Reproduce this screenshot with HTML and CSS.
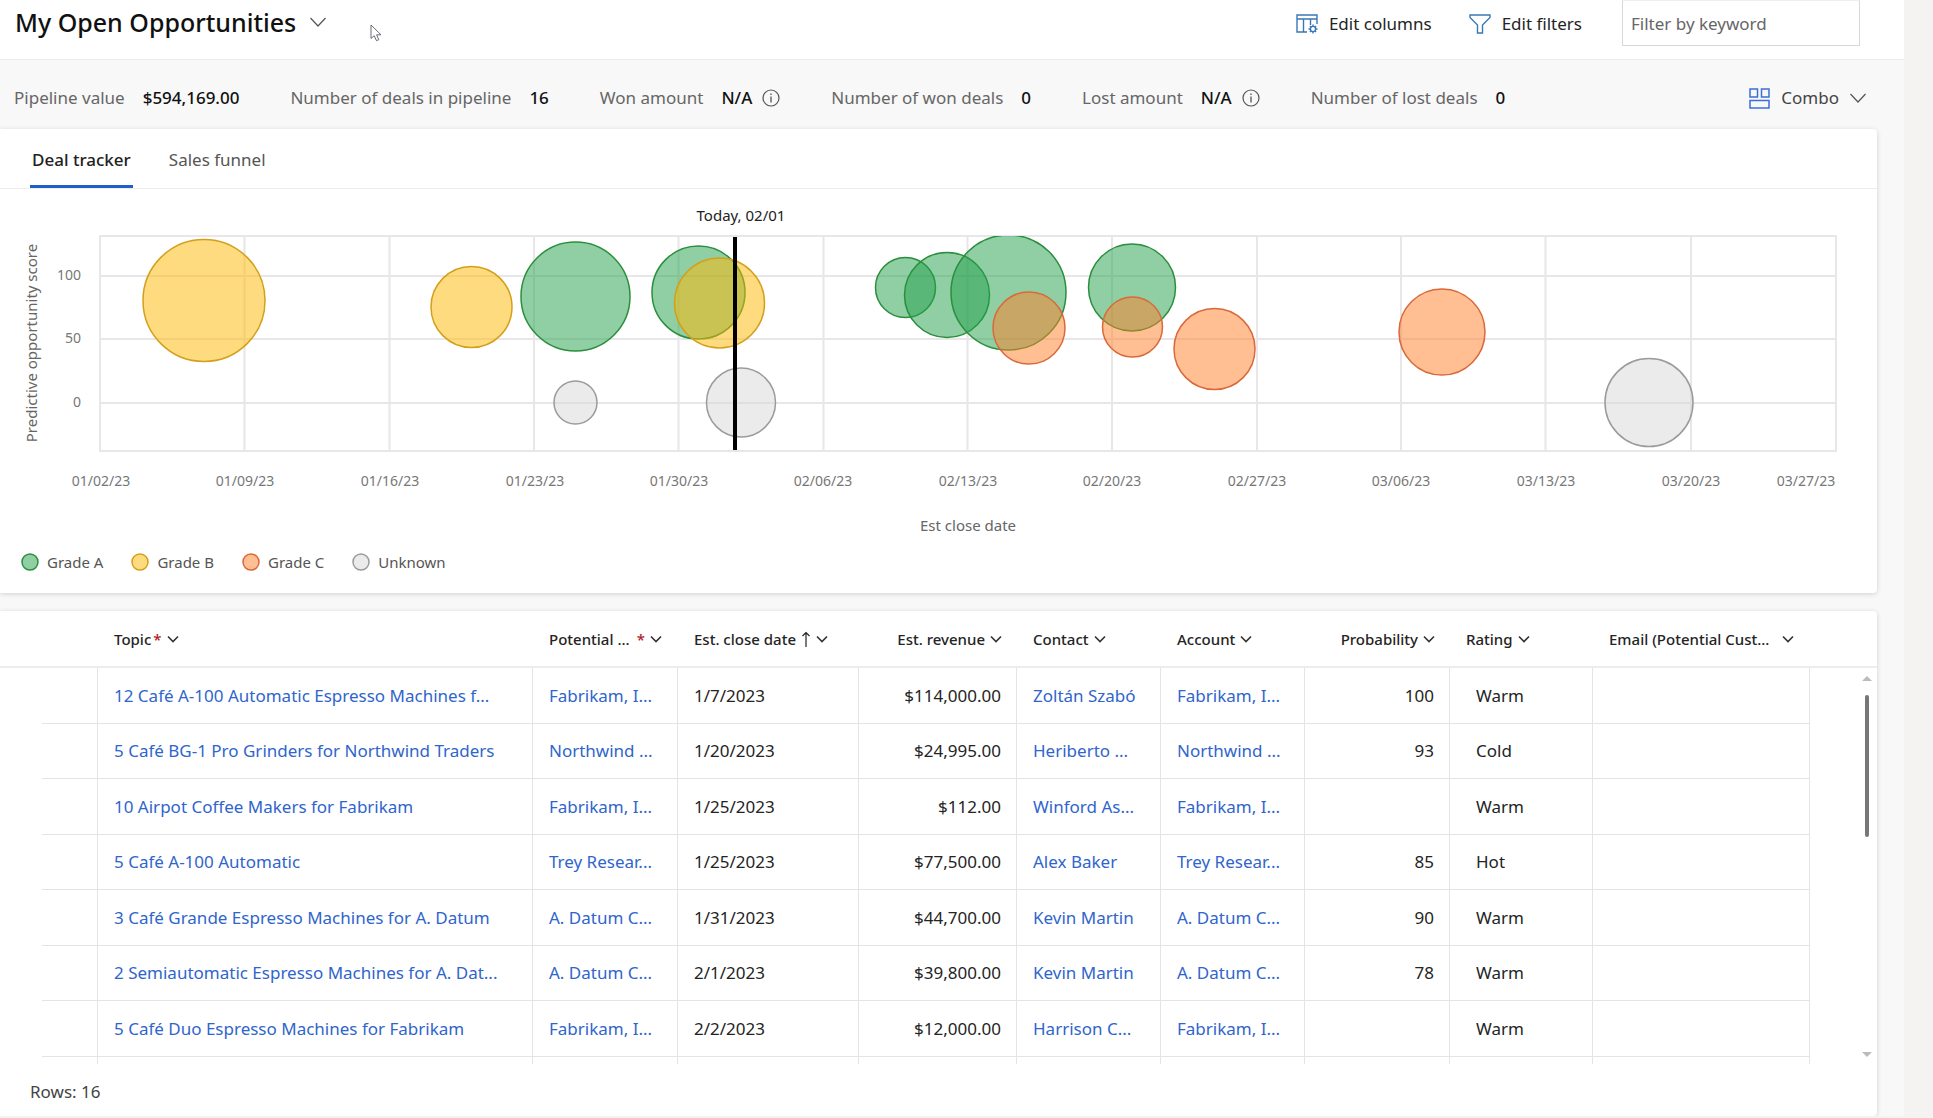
FILE: index.html
```html
<!DOCTYPE html>
<html lang="en">
<head>
<meta charset="utf-8">
<title>My Open Opportunities</title>
<meta name="viewport" content="width=device-width, initial-scale=1">
<link rel="stylesheet" href="styles.css">
</head>
<body>
<svg class="sprite" aria-hidden="true">
  <symbol id="chev" viewBox="0 0 12 8"><path d="M1 1.5l5 5 5-5" fill="none" stroke="currentColor" stroke-width="1.6"/></symbol>
  <symbol id="chev-thin" viewBox="0 0 16 10"><path d="M.5 1l7.500 8 7.500-8" fill="none" stroke="currentColor" stroke-width="1.200"/></symbol>
  <symbol id="info" viewBox="0 0 18 18"><circle cx="9" cy="9" r="8" fill="none" stroke="currentColor" stroke-width="1.200"/><path d="M9 7.500v6M9 4.500v1.500" stroke="currentColor" stroke-width="1.300"/></symbol>
</svg>
<main class="page">
  <header class="topbar">
    <h1 class="title"><button class="title-button" type="button">My Open Opportunities <svg class="chev-thin"><use href="#chev-thin"/></svg></button></h1>
    <div class="commands">
      <button class="command" type="button">
        <svg class="command-icon" viewBox="0 0 22 20"><g fill="none" stroke="currentColor" stroke-width="1.400"><path d="M11 18H1V1h20v9M1 5h20M7.500 5v13M14.500 5v6"/><circle cx="17" cy="15" r="2.600"/><path d="M17 10.500v1.900M17 17.600v1.900M12.500 15h1.900M19.600 15h1.900M13.900 11.900l1.300 1.300M18.800 16.800l1.300 1.300M20.100 11.900l-1.300 1.300M15.200 16.800l-1.300 1.300"/></g></svg>
        Edit columns</button>
      <button class="command" type="button">
        <svg class="command-icon" viewBox="0 0 22 20"><path d="M1 1h20v2.500l-7.500 7.500v8h-5v-8L1 3.500z" fill="none" stroke="currentColor" stroke-width="1.400"/></svg>
        Edit filters</button>
    </div>
    <input class="keyword" type="text" placeholder="Filter by keyword" aria-label="Filter by keyword">
    <svg class="pointer" viewBox="0 0 12 18" aria-hidden="true"><path d="M1 1v13.500l3.200-2.800 2.300 5 2.300-1-2.200-4.900H11z" fill="#fff" stroke="#6b6b76" stroke-width="1"/></svg>
  </header>

  <section class="metrics" aria-label="Summary">
    <dl class="metric-list">
      <div class="metric"><dt>Pipeline value</dt><dd>$594,169.00</dd></div>
      <div class="metric"><dt>Number of deals in pipeline</dt><dd>16</dd></div>
      <div class="metric"><dt>Won amount</dt><dd>N/A <svg class="info"><use href="#info"/></svg></dd></div>
      <div class="metric"><dt>Number of won deals</dt><dd>0</dd></div>
      <div class="metric"><dt>Lost amount</dt><dd>N/A <svg class="info"><use href="#info"/></svg></dd></div>
      <div class="metric"><dt>Number of lost deals</dt><dd>0</dd></div>
    </dl>
    <button class="view-switch" type="button">
      <svg class="combo-icon" viewBox="0 0 21 21"><path d="M1 1h7.500v8H1zM12.500 1H20v8h-7.500zM1 12.500h19V20H1z" fill="none" stroke="currentColor" stroke-width="1.500"/></svg>
      Combo
      <svg class="chev-thin"><use href="#chev-thin"/></svg>
    </button>
  </section>

  <section class="card chart-card">
    <div class="tabs" role="tablist">
      <button class="tab tab-active" type="button" role="tab" aria-selected="true">Deal tracker</button>
      <button class="tab" type="button" role="tab" aria-selected="false">Sales funnel</button>
    </div>
    <svg class="chart" viewBox="0 189 1877 351" role="img" aria-label="Deal tracker">
      <clipPath id="plot"><rect x="100" y="236" width="1736" height="215"/></clipPath>
      <path class="grid" d="M100 236H1836V451H100zM100 276H1836M100 339H1836M100 403H1836M244.500 236V451M389.500 236V451M534 236V451M678.500 236V451M823.500 236V451M967.500 236V451M1112 236V451M1257 236V451M1401 236V451M1545.500 236V451M1691 236V451"/>
      <g clip-path="url(#plot)">
        <circle class="b" cx="204" cy="300.500" r="61"/>
        <circle class="b" cx="471.500" cy="307" r="40.500"/>
        <circle class="a" cx="575.500" cy="296.500" r="54.500"/>
        <circle class="u" cx="575.500" cy="402.500" r="21.500"/>
        <circle class="a" cx="698.500" cy="292.500" r="46.500"/>
        <circle class="b" cx="719.500" cy="303" r="45"/>
        <circle class="u" cx="741" cy="402.500" r="34.500"/>
        <circle class="a" cx="905.500" cy="287.500" r="30"/>
        <circle class="a" cx="947" cy="295" r="42.500"/>
        <circle class="a" cx="1008.500" cy="292.500" r="57.500"/>
        <circle class="c" cx="1029" cy="328" r="36"/>
        <circle class="a" cx="1132" cy="287.500" r="43.500"/>
        <circle class="c" cx="1132.500" cy="327" r="30"/>
        <circle class="c" cx="1214.500" cy="349" r="40.500"/>
        <circle class="c" cx="1442" cy="332" r="43"/>
        <circle class="u" cx="1649" cy="402.500" r="44"/>
      </g>
      <path class="today" d="M735 237V450"/>
      <text class="today-label" x="741" y="221">Today, 02/01</text>
      <g class="tick tick-y"><text x="81" y="280">100</text><text x="81" y="343">50</text><text x="81" y="407">0</text></g>
      <g class="tick tick-x"><text x="101" y="486">01/02/23</text><text x="245" y="486">01/09/23</text><text x="390" y="486">01/16/23</text><text x="535" y="486">01/23/23</text><text x="679" y="486">01/30/23</text><text x="823" y="486">02/06/23</text><text x="968" y="486">02/13/23</text><text x="1112" y="486">02/20/23</text><text x="1257" y="486">02/27/23</text><text x="1401" y="486">03/06/23</text><text x="1546" y="486">03/13/23</text><text x="1691" y="486">03/20/23</text><text x="1806" y="486">03/27/23</text></g>
      <text class="axis-title" x="968" y="531">Est close date</text>
      <text class="axis-title" transform="translate(37 343) rotate(-90)">Predictive opportunity score</text>
    </svg>
    <ul class="legend">
      <li><svg class="dot"><circle class="a" cx="9" cy="9" r="8"/></svg>Grade A</li>
      <li><svg class="dot"><circle class="b" cx="9" cy="9" r="8"/></svg>Grade B</li>
      <li><svg class="dot"><circle class="c" cx="9" cy="9" r="8"/></svg>Grade C</li>
      <li><svg class="dot"><circle class="u" cx="9" cy="9" r="8"/></svg>Unknown</li>
    </ul>
  </section>

  <section class="card list-card">
    <div class="table-wrap">
      <table class="deals">
        <colgroup><col class="w-gutter"><col class="w-check"><col><col class="w-145"><col class="w-181"><col class="w-158"><col class="w-144"><col class="w-144"><col class="w-145"><col class="w-143"><col class="w-217"><col class="w-tail"></colgroup>
        <thead>
          <tr>
            <td></td><td></td>
            <th scope="col"><button type="button"><span>Topic<span class="req">*</span></span><svg class="chev"><use href="#chev"/></svg></button></th>
            <th scope="col"><button class="wide" type="button">Potential ...<span class="req push">*</span><svg class="chev"><use href="#chev"/></svg></button></th>
            <th scope="col"><button type="button">Est. close date<svg class="sort" viewBox="0 0 10 16"><path d="M5 16V1.500M1.500 5L5 1.500 8.500 5" fill="none" stroke="currentColor" stroke-width="1.200"/></svg><svg class="chev"><use href="#chev"/></svg></button></th>
            <th scope="col" class="num"><button type="button">Est. revenue<svg class="chev"><use href="#chev"/></svg></button></th>
            <th scope="col"><button type="button">Contact<svg class="chev"><use href="#chev"/></svg></button></th>
            <th scope="col"><button type="button">Account<svg class="chev"><use href="#chev"/></svg></button></th>
            <th scope="col" class="num"><button type="button">Probability<svg class="chev"><use href="#chev"/></svg></button></th>
            <th scope="col"><button type="button">Rating<svg class="chev"><use href="#chev"/></svg></button></th>
            <th scope="col"><button class="wide" type="button">Email (Potential Cust...<svg class="chev push"><use href="#chev"/></svg></button></th>
            <td></td>
          </tr>
        </thead>
        <tbody>
          <tr><td></td><td></td><td><a href="#">12 Café A-100 Automatic Espresso Machines f...</a></td><td><a href="#">Fabrikam, I...</a></td><td>1/7/2023</td><td class="num">$114,000.00</td><td><a href="#">Zoltán Szabó</a></td><td><a href="#">Fabrikam, I...</a></td><td class="num">100</td><td class="rating">Warm</td><td></td><td></td></tr>
          <tr><td></td><td></td><td><a href="#">5 Café BG-1 Pro Grinders for Northwind Traders</a></td><td><a href="#">Northwind ...</a></td><td>1/20/2023</td><td class="num">$24,995.00</td><td><a href="#">Heriberto ...</a></td><td><a href="#">Northwind ...</a></td><td class="num">93</td><td class="rating">Cold</td><td></td><td></td></tr>
          <tr><td></td><td></td><td><a href="#">10 Airpot Coffee Makers for Fabrikam</a></td><td><a href="#">Fabrikam, I...</a></td><td>1/25/2023</td><td class="num">$112.00</td><td><a href="#">Winford As...</a></td><td><a href="#">Fabrikam, I...</a></td><td class="num"></td><td class="rating">Warm</td><td></td><td></td></tr>
          <tr><td></td><td></td><td><a href="#">5 Café A-100 Automatic</a></td><td><a href="#">Trey Resear...</a></td><td>1/25/2023</td><td class="num">$77,500.00</td><td><a href="#">Alex Baker</a></td><td><a href="#">Trey Resear...</a></td><td class="num">85</td><td class="rating">Hot</td><td></td><td></td></tr>
          <tr><td></td><td></td><td><a href="#">3 Café Grande Espresso Machines for A. Datum</a></td><td><a href="#">A. Datum C...</a></td><td>1/31/2023</td><td class="num">$44,700.00</td><td><a href="#">Kevin Martin</a></td><td><a href="#">A. Datum C...</a></td><td class="num">90</td><td class="rating">Warm</td><td></td><td></td></tr>
          <tr><td></td><td></td><td><a href="#">2 Semiautomatic Espresso Machines for A. Dat...</a></td><td><a href="#">A. Datum C...</a></td><td>2/1/2023</td><td class="num">$39,800.00</td><td><a href="#">Kevin Martin</a></td><td><a href="#">A. Datum C...</a></td><td class="num">78</td><td class="rating">Warm</td><td></td><td></td></tr>
          <tr><td></td><td></td><td><a href="#">5 Café Duo Espresso Machines for Fabrikam</a></td><td><a href="#">Fabrikam, I...</a></td><td>2/2/2023</td><td class="num">$12,000.00</td><td><a href="#">Harrison C...</a></td><td><a href="#">Fabrikam, I...</a></td><td class="num"></td><td class="rating">Warm</td><td></td><td></td></tr>
          <tr class="stub"><td></td><td></td><td></td><td></td><td></td><td></td><td></td><td></td><td></td><td></td><td></td><td></td></tr>
        </tbody>
      </table>
      <div class="scrollbar" aria-hidden="true"><span class="arrow-up"></span><span class="thumb"></span><span class="arrow-down"></span></div>
    </div>
    <footer class="row-count">Rows: 16</footer>
  </section>
</main>
</body>
</html>
```
FILE: styles.css
```css
* { box-sizing: border-box; }
body {
  margin: 0;
  background: #f4f3f2;
  color: #242424;
  font: 17px/24px "Noto Sans", "Open Sans", sans-serif;
}
button, input { font: inherit; color: inherit; }
button { padding: 0; border: 0; background: none; white-space: nowrap; }
svg { flex: none; }
.sprite { position: absolute; width: 0; height: 0; }

.page { margin-right: 29px; background: #f8f8f8; }

.topbar {
  position: relative;
  display: flex;
  align-items: flex-start;
  height: 60px;
  padding: 0 44px 0 15px;
  background: #fff;
  border-bottom: 1px solid #ebebeb;
}
.title { margin: 0; font-size: 25px; line-height: 44px; font-weight: 500; color: #111; }
.title-button { display: flex; align-items: center; gap: 14px; }
.chev-thin { width: 16px; height: 10px; color: #555; }
.commands { display: flex; gap: 37px; margin: 12px 40px 0 auto; }
.command { display: flex; align-items: center; gap: 11px; }
.command-icon { width: 22px; height: 20px; color: #3a78b5; }
.keyword { width: 238px; height: 46px; padding: 0 8px; border: 1px solid #d8d8d8; border-top-color: #eee; background: #fff; }
.keyword::placeholder { color: #666; opacity: 1; }
.pointer { position: absolute; left: 370px; top: 24px; width: 12px; height: 18px; }

.metrics { display: flex; align-items: center; justify-content: space-between; height: 69px; padding: 7px 38px 0 14px; }
.metric-list { display: flex; gap: 51px; margin: 0; }
.metric { display: flex; gap: 18px; color: #666; white-space: nowrap; }
.metric dd { display: flex; align-items: center; gap: 10px; margin: 0; color: #111; font-weight: 500; }
.info { width: 18px; height: 18px; color: #555; }
.view-switch { display: flex; align-items: center; gap: 11px; color: #444; }
.combo-icon { width: 21px; height: 21px; color: #3b6fd8; }

.card { margin-right: 27px; background: #fff; border-radius: 0 4px 4px 0; box-shadow: 0 1px 5px rgba(0, 0, 0, .16); }
.tabs { display: flex; gap: 34px; height: 60px; padding-left: 30px; border-bottom: 1px solid #ededed; }
.tab { padding: 2px 2px 0; border-bottom: 3px solid transparent; border-top: 3px solid transparent; color: #555; }
.tab-active { border-bottom-color: #1f5fc9; color: #222; font-weight: 500; }

.chart { display: block; width: 100%; height: auto; font-size: 15px; }
.grid { fill: none; stroke: #e8e6e8; stroke-width: 2; }
.a { fill: rgba(34, 160, 74, .5); stroke: #2a8f3c; stroke-width: 1.5; }
.b { fill: rgba(255, 184, 0, .5); stroke: #d3a01c; stroke-width: 1.5; }
.c { fill: rgba(255, 128, 40, .5); stroke: #d9693a; stroke-width: 1.5; }
.u { fill: rgba(216, 216, 216, .5); stroke: #9b9b9b; stroke-width: 1.5; }
.today { stroke: #000; stroke-width: 4; }
.today-label { fill: #222; text-anchor: middle; }
.tick { fill: #777; font-size: 14px; }
.tick-y { text-anchor: end; }
.tick-x { text-anchor: middle; }
.axis-title { fill: #666; text-anchor: middle; }
.legend { display: flex; gap: 28px; margin: 0; padding: 10px 0 19px 21px; list-style: none; font-size: 15px; line-height: 24px; color: #555; }
.legend li { display: flex; align-items: center; gap: 8px; }
.dot { width: 18px; height: 18px; }

.list-card { margin-top: 18px; }
.table-wrap { position: relative; }
.deals { width: 100%; table-layout: fixed; border-collapse: separate; border-spacing: 0; white-space: nowrap; }
.deals td, .deals th { padding: 0 16px; text-align: left; }
.deals thead td, .deals thead th { height: 57px; border-bottom: 2px solid #ededed; font-size: 15px; font-weight: 500; }
.deals thead button { display: inline-flex; align-items: center; gap: 5px; vertical-align: middle; }
.deals thead .wide { display: flex; width: 100%; }
.deals .push { margin-left: auto; }
.deals tbody td { height: 55px; border-right: 1px solid #e4e4e4; border-bottom: 1px solid #e4e4e4; }
.deals tbody tr:nth-child(odd) td { height: 56px; }
.deals tbody td:first-child, .deals tbody td:last-child { border: 0; }
.deals tbody .stub td { height: 7px; border-bottom: 0; }
.deals .num { padding-right: 15px; text-align: right; }
.deals .rating { padding-left: 26px; }
.deals a { color: #2f65cc; text-decoration: none; }
.req { padding-left: 2px; color: #b3202c; }
.chev { width: 12px; height: 8px; color: #333; }
.sort { width: 10px; height: 16px; }
.w-gutter { width: 42px; }
.w-check { width: 56px; }
.w-143 { width: 143px; }
.w-144 { width: 144px; }
.w-145 { width: 145px; }
.w-158 { width: 158px; }
.w-181 { width: 181px; }
.w-217 { width: 217px; }
.w-tail { width: 67px; }
.scrollbar { position: absolute; top: 65px; right: 5px; bottom: 7px; display: flex; flex-direction: column; align-items: center; width: 10px; }
.arrow-up { border: 5px solid transparent; border-top: 0; border-bottom-color: #bbb; }
.thumb { width: 4px; height: 142px; margin-top: 14px; border-radius: 2px; background: #777; }
.arrow-down { margin-top: auto; border: 5px solid transparent; border-bottom: 0; border-top-color: #bbb; }
.row-count { padding: 16px 30px 12px; color: #444; }
```
